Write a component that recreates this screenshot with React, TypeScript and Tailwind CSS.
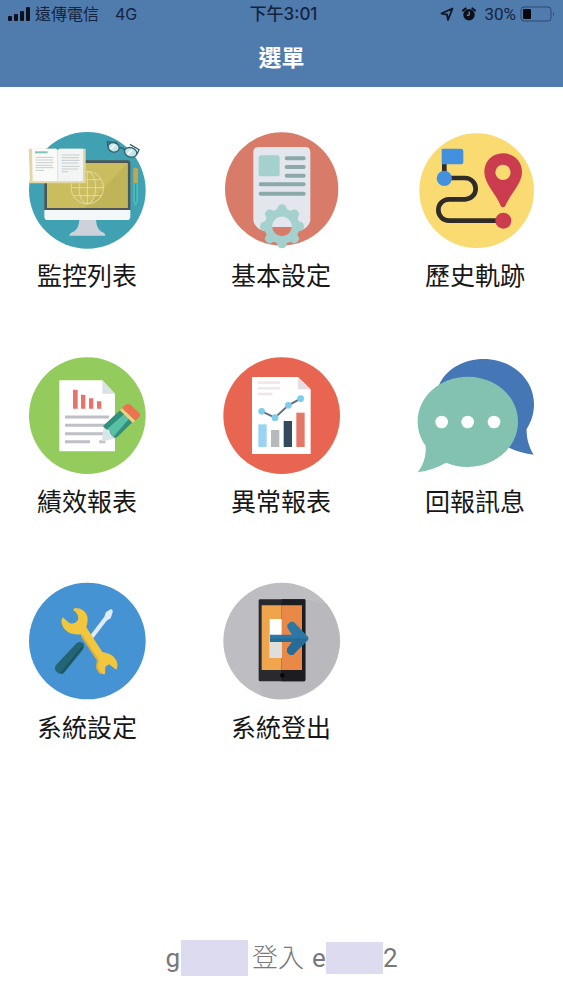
import type { ReactNode } from 'react'

type IconProps = { viewBox: string; children: ReactNode }

function Icon({ viewBox, children }: IconProps) {
  return (
    <svg viewBox={viewBox} className="block h-[118px] w-[118px] overflow-visible" aria-hidden="true">
      {children}
    </svg>
  )
}

const MonitorIcon = () => (
  <Icon viewBox="39 33 354 354">
    <circle cx="217" cy="211" r="175" fill="#40a1b3" />
    <rect x="88" y="121" width="258" height="155" rx="7" fill="#4c5657" />
    <rect x="96" y="129" width="242" height="135" fill="#c9bd60" />
    <path d="M338 129v135H210z" fill="#c0b459" />
    <path d="M88 270h258v20q0 10-10 10H98q-10 0-10-10z" fill="#f4f7f8" />
    <path d="M193 300h50q2 25 14 34 14 5 14 13H163q0-8 15-13 13-9 15-34z" fill="#cdd2da" />
    <g fill="none" stroke="#e3dc9a" strokeWidth="3">
      <circle cx="217" cy="203" r="49" />
      <ellipse cx="217" cy="203" rx="25" ry="49" />
      <path d="M168 203h98M217 154v98M176 179h82M176 227h82" />
    </g>
    <path d="M41 86h83l4 5 5-5h79v104H45z" fill="#e2d6a6" />
    <path d="M51 86h72l5 5v93H53z" fill="#fafbf9" />
    <path d="M133 86h71v98h-76V91z" fill="#f3f5f4" />
    <path d="M128 91v92" stroke="#dde2e2" strokeWidth="3" />
    <path d="M60 97h38" stroke="#7dc5bd" strokeWidth="6" />
    <path
      d="M62 112h54M62 120h52M62 128h54M62 136h50M62 143h54M62 151h26M140 105h54M140 113h52M140 121h54M140 129h50M140 139h54M140 147h50M140 155h20"
      stroke="#c6cbcd"
      strokeWidth="3"
    />
    <g fill="#c3e5ee" stroke="#35616c" strokeWidth="4">
      <ellipse cx="296" cy="82" rx="17" ry="14" transform="rotate(18 296 82)" />
      <ellipse cx="347" cy="97" rx="19" ry="14" transform="rotate(18 347 97)" />
      <path d="M312 84q9-3 17 5M279 80l-2-15 29 3M366 103l6-14-27-16" fill="none" />
    </g>
    <path d="M286 88l14-14M337 104l14-14" stroke="#f7fdfd" strokeWidth="6" />
    <path d="M355 147q7-9 14 0v43h-14z" fill="#c6a64c" />
    <path d="M355 190h14v54l-7 15-7-15z" fill="#4dbdb9" />
    <path d="M362 190v55" stroke="#318e9c" strokeWidth="3" />
  </Icon>
)

const gearTeeth = [0, 45, 90, 135, 180, 225, 270, 315]

const SettingsIcon = () => (
  <Icon viewBox="36 33 354 354">
    <circle cx="215" cy="207" r="170" fill="#d87b68" />
    <path d="M148 81h137q16 0 16 16v205q-5 20-31 31H160q-25-9-30-31V97q0-16 18-16z" fill="#e3e6ec" />
    <rect x="146" y="106" width="63" height="63" rx="8" fill="#a4d0ce" />
    <path
      d="M230 115h51M230 141h51M230 167h51M152 193h129M152 221h129"
      stroke="#8ca9aa"
      strokeWidth="12"
      strokeLinecap="round"
    />
    <path d="M185 321h61v18q-31 23-61 0z" fill="#d87b68" />
    <circle cx="216" cy="319" r="41" fill="none" stroke="#a4d0ce" strokeWidth="23" />
    <g fill="#a4d0ce">
      {gearTeeth.map((angle) => (
        <path key={angle} d="M200 271l5-14q11-8 22 0l5 14z" transform={`rotate(${angle} 216 319)`} />
      ))}
    </g>
  </Icon>
)

const RouteIcon = () => (
  <Icon viewBox="33 33 354 354">
    <circle cx="215" cy="212" r="172" fill="#fadb72" />
    <path
      d="M118 120v54h62a32 32 0 0 1 0 64h-48a32 32 0 0 0 0 64h160"
      fill="none"
      stroke="#2e2b29"
      strokeWidth="14"
    />
    <path d="M110 86h57q8 0 8 8v31q0 8-8 8h-57z" fill="#4390df" />
    <circle cx="118" cy="175" r="23" fill="#4390df" />
    <circle cx="295" cy="302" r="24" fill="#cb3c4e" />
    <path
      fillRule="evenodd"
      d="M294 100c34 0 57 25 57 56 0 35-35 66-50 101q-7 10-14 0c-14-35-49-66-49-101 0-31 22-56 56-56zm0 34a23 23 0 1 0 0 46 23 23 0 0 0 0-46z"
      fill="#cb3c4e"
    />
  </Icon>
)

const PerformanceIcon = () => (
  <Icon viewBox="39 36 354 354">
    <circle cx="217" cy="212" r="175" fill="#93cb5c" />
    <path d="M133 106h129l38 40v173H133z" fill="#fff" />
    <path d="M262 106v40h38z" fill="#dbe1e5" />
    <path d="M174 134h14v57h-14zM198 149h13v42h-13zM222 160h13v31h-13zM246 169h13v22h-13z" fill="#e7736b" />
    <path d="M150 216h132M150 241h125M150 266h116M150 290h75M253 290h18" stroke="#bebfc7" strokeWidth="9" />
    <path d="M267 239l-7 51 48-12z" fill="#dae5e9" />
    <path d="M315 196l-51 47q6 11 19 12 4 20 20 25l50-49z" fill="#328f7c" />
    <path d="M328 207l-54 47q7 2 11 1 1 13 10 21l47-55z" fill="#58c0a5" />
    <path d="M315 196l6-7 40 38-8 7z" fill="#ecd184" />
    <path d="M321 189l10-10q8-4 15 0l27 25q5 7 0 12l-12 11z" fill="#ed7350" />
  </Icon>
)

const ErrorReportIcon = () => (
  <Icon viewBox="36 36 354 354">
    <circle cx="215" cy="212" r="175" fill="#e86552" />
    <path d="M126 96h138l38 37v194H126z" fill="#fff" />
    <path d="M264 96v37h38z" fill="#e5dbe0" />
    <path d="M143 113h67M143 130h67M143 147h44" stroke="#efe4e8" strokeWidth="7" />
    <path d="M145 238h25v68h-25z" fill="#9bd4f2" />
    <path d="M183 255h25v51h-25z" fill="#b7babc" />
    <path d="M221 228h25v78h-25z" fill="#34495e" />
    <path d="M259 203h25v103h-25z" fill="#e47767" />
    <path d="M155 199l40 19 40-37 37-20" fill="none" stroke="#686c80" strokeWidth="6" />
    <g fill="#7fcdec">
      <circle cx="155" cy="199" r="10" />
      <circle cx="195" cy="218" r="10" />
      <circle cx="235" cy="181" r="10" />
      <circle cx="272" cy="161" r="10" />
    </g>
  </Icon>
)

const MessageIcon = () => (
  <Icon viewBox="33 36 354 354">
    <path
      d="M102 121C122 72 178 42 236 42c84 0 151 60 151 135 0 29-8 53-22 75-1 29 8 56 21 77-25-3-49-9-72-20z"
      fill="#4577b7"
    />
    <path
      d="M188 95c84 0 151 60 151 135s-67 136-151 136c-23 0-45-5-65-13-27 15-55 25-85 29 16-20 26-47 24-80-15-20-24-45-24-72 0-75 66-135 150-135z"
      fill="#83c2b0"
    />
    <g fill="#fff">
      <circle cx="110" cy="231" r="19" />
      <circle cx="188" cy="231" r="19" />
      <circle cx="267" cy="231" r="19" />
    </g>
  </Icon>
)

const ToolsIcon = () => (
  <Icon viewBox="39 39 354 354">
    <circle cx="217" cy="213" r="175" fill="#4593d2" />
    <path d="M222 201l46-61 5-14 15-9q7 3 5 10l-6 18-12 7-46 60z" fill="#deecfa" />
    <path d="M186 218q10-5 17 1l4 4q1 9-4 17l-56 69q-8 6-17 1l-8-7q-5-9 1-18z" fill="#246574" />
    <path d="M203 230l-63 79" stroke="#1a5060" strokeWidth="5" />
    <path
      d="M180 114c22 0 38 14 38 34 0 9-2 17-4 24l48 74c18 3 41 12 45 35 1 8-1 13-3 18l-22-16-11 7-1 23c-16-1-25-12-24-27l3-15-52-78c-24 3-47-6-55-27-4-10-3-18 1-24l20 17c11 5 22-2 26-10 3-10-2-21-15-30z"
      fill="#f3c73d"
    />
    <path d="M200 197l49 74-3 16q0 14 12 23" fill="none" stroke="#dbaf3f" strokeWidth="6" />
  </Icon>
)

const LogoutIcon = () => (
  <Icon viewBox="36 39 354 354">
    <circle cx="215" cy="213" r="175" fill="#bebdc1" />
    <path d="M285 89l66 14q39 55 39 110c-4 92-79 169-175 175-22 0-42-4-60-11l-9-43h139z" fill="#b9b8bc" />
    <rect x="146" y="88" width="140" height="246" rx="4" fill="#292a2e" />
    <path d="M215 88h69q2 0 2 4v238q0 4-4 4h-67z" fill="#1d1c20" />
    <path d="M155 106h60v194h-60z" fill="#eea54b" />
    <path d="M215 106h61v194h-61z" fill="#e98948" />
    <path d="M179 147h36v117h-36z" fill="#fff" />
    <path d="M179 216h36v48h-36z" fill="#dededb" />
    <circle cx="217" cy="316" r="7" fill="#080809" />
    <path
      d="M180 194h66l-14-21v-9l10-9h9l44 47v7l-46 46h-9l-9-9v-9l15-21h-66z"
      fill="#2c78a4"
    />
    <path d="M180 205h114l-45 50h-9l-9-9v-9l15-21h-66z" fill="#266c96" />
  </Icon>
)

const items = [
  { label: '監控列表', icon: MonitorIcon },
  { label: '基本設定', icon: SettingsIcon },
  { label: '歷史軌跡', icon: RouteIcon },
  { label: '績效報表', icon: PerformanceIcon },
  { label: '異常報表', icon: ErrorReportIcon },
  { label: '回報訊息', icon: MessageIcon },
  { label: '系統設定', icon: ToolsIcon },
  { label: '系統登出', icon: LogoutIcon },
]

function StatusBar() {
  return (
    <div className="grid h-7 grid-cols-[1fr_auto_1fr] items-center px-2 text-[16px] leading-7 text-[#14243f]">
      {/* Carrier */}
      <div className="flex items-center gap-1">
        <svg width="23" height="14" viewBox="0 0 23 14" fill="#0b101b" aria-hidden="true">
          <rect y="9" width="4" height="5" rx="1" />
          <rect x="6" y="7" width="4" height="7" rx="1" />
          <rect x="12" y="4" width="4" height="10" rx="1" />
          <rect x="18" width="4" height="14" rx="1" />
        </svg>
        <span>遠傳電信</span>
        <span className="pl-3">4G</span>
      </div>

      <span className="pl-1 text-[17px] font-medium">下午3:01</span>

      {/* Indicators */}
      <div className="flex items-center justify-end gap-2">
        <svg width="14" height="14" viewBox="0 0 14 14" fill="none" stroke="#0e1726" strokeWidth="1.8" strokeLinejoin="round" aria-hidden="true">
          <path d="M12.5 1.5L1.5 6.5l5.5 1 1 5.5z" />
        </svg>
        <svg width="14" height="14" viewBox="0 0 14 14" aria-hidden="true">
          <circle cx="7" cy="7.7" r="5.7" fill="#0b101b" />
          <path d="M1 3.6l2.6-2.2M13 3.6l-2.6-2.2" stroke="#0b101b" strokeWidth="2" strokeLinecap="round" />
          <path d="M7.2 4.5v3.7H4.8" stroke="#8fa9c8" strokeWidth="1" fill="none" />
        </svg>
        <span className="font-['Roboto',sans-serif] text-[17px]">30%</span>
        <svg width="35" height="16" viewBox="0 0 35 16" className="-ml-1" aria-hidden="true">
          <rect x="1" y="1" width="30" height="14" rx="3" fill="none" stroke="#2d4a70" />
          <rect x="3" y="3" width="8" height="10" rx="1" fill="#06080d" />
          <path d="M33 6q2 2 0 4z" fill="#2d4a70" />
        </svg>
      </div>
    </div>
  )
}

export default function App() {
  return (
    <div className="flex min-h-screen flex-col bg-white font-['Inter','Noto_Sans_CJK_TC',sans-serif]">
      <header className="h-[87px] bg-[#507bad]">
        <StatusBar />
        <h1 className="pt-3 text-center text-[23px] leading-9 font-bold text-white">選單</h1>
      </header>

      <main className="grid grid-cols-[repeat(3,118px)] justify-between gap-y-[62px] pt-11 pr-[29px] pl-7">
        {items.map(({ label, icon: MenuIcon }) => (
          <button key={label} type="button" className="flex cursor-pointer flex-col items-center gap-2">
            <MenuIcon />
            <span className="text-[25px] leading-[38px] whitespace-nowrap text-[#171717]">{label}</span>
          </button>
        ))}
      </main>

      <footer className="mt-auto flex items-center justify-center pt-8 pb-[22px] text-[26px] leading-10 text-[#78787a]">
        <span className="font-['Roboto',sans-serif]">g</span>
        <span className="ml-px h-9 w-[67px] bg-[#dcdbf0]" />
        <span className="pr-2 pl-1 font-light">登入</span>
        <span className="font-['Roboto',sans-serif]">e</span>
        <span className="h-8 w-[57px] bg-[#dcdbf0]" />
        <span className="font-['Roboto',sans-serif]">2</span>
      </footer>
    </div>
  )
}
